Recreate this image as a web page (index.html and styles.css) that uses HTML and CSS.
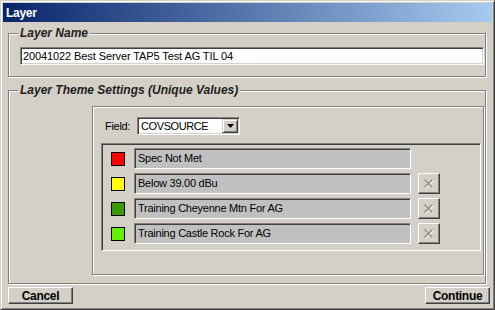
FILE: index.html
```html
<!DOCTYPE html>
<html>
<head>
<meta charset="utf-8">
<title>Layer</title>
<link rel="stylesheet" href="styles.css">
</head>
<body>
<div class="window">
  <div class="titlebar">Layer</div>
  <div class="content">
    <section class="group group-name">
      <div class="legend">Layer Name</div>
      <div class="textbox">20041022 Best Server TAP5 Test AG TIL 04</div>
    </section>
    <section class="group group-theme">
      <div class="legend">Layer Theme Settings (Unique Values)</div>
      <div class="panel">
        <div class="field-row">
          <span class="field-label">Field:</span>
          <div class="combo">
            <span class="combo-text">COVSOURCE</span>
            <span class="combo-btn"><svg width="7" height="4" viewBox="0 0 7 4"><polygon points="0,0 7,0 3.5,4" fill="#000"/></svg></span>
          </div>
        </div>
        <div class="listbox">
          <div class="row">
            <span class="swatch swatch-red"></span>
            <div class="value">Spec Not Met</div>
          </div>
          <div class="row">
            <span class="swatch swatch-yellow"></span>
            <div class="value">Below 39.00 dBu</div>
            <button class="xbtn"><svg width="10" height="10" viewBox="0 0 10 10"><path d="M1.5 1.5 L9.5 9.5 M9.5 1.5 L1.5 9.5" stroke="#ffffff" stroke-width="1.1"/><path d="M0.5 0.5 L8.5 8.5 M8.5 0.5 L0.5 8.5" stroke="#868686" stroke-width="1.2"/></svg></button>
          </div>
          <div class="row">
            <span class="swatch swatch-dkgreen"></span>
            <div class="value">Training Cheyenne Mtn For AG</div>
            <button class="xbtn"><svg width="10" height="10" viewBox="0 0 10 10"><path d="M1.5 1.5 L9.5 9.5 M9.5 1.5 L1.5 9.5" stroke="#ffffff" stroke-width="1.1"/><path d="M0.5 0.5 L8.5 8.5 M8.5 0.5 L0.5 8.5" stroke="#868686" stroke-width="1.2"/></svg></button>
          </div>
          <div class="row">
            <span class="swatch swatch-ltgreen"></span>
            <div class="value">Training Castle Rock For AG</div>
            <button class="xbtn"><svg width="10" height="10" viewBox="0 0 10 10"><path d="M1.5 1.5 L9.5 9.5 M9.5 1.5 L1.5 9.5" stroke="#ffffff" stroke-width="1.1"/><path d="M0.5 0.5 L8.5 8.5 M8.5 0.5 L0.5 8.5" stroke="#868686" stroke-width="1.2"/></svg></button>
          </div>
        </div>
      </div>
    </section>
    <div class="footer">
      <button class="btn">Cancel</button>
      <button class="btn">Continue</button>
    </div>
  </div>
</div>
</body>
</html>
```
FILE: styles.css
```css
* { box-sizing: border-box; }
html, body { margin: 0; padding: 0; }
body {
  background: #d4d0c8;
  font-family: "Liberation Sans", Arial, sans-serif;
  color: #000;
}
.window {
  width: 495px;
  height: 310px;
  background: #d4d0c8;
  border: 1px solid;
  border-color: #d4d0c8 #404040 #404040 #d4d0c8;
  box-shadow: inset 1px 1px 0 #fff, inset -1px -1px 0 #808080;
  padding: 2px;
  display: flex;
  flex-direction: column;
}
.titlebar {
  height: 19px;
  flex: 0 0 19px;
  background: linear-gradient(to right, #0a246a, #a6caf0);
  color: #fff;
  font-weight: bold;
  font-size: 12px;
  line-height: 19px;
  padding: 1px 0 0 3px;
  letter-spacing: -0.3px;
}
.content {
  padding: 11px 0 0 5px;
  display: flex;
  flex-direction: column;
}
.group, .panel {
  border: 1px solid #808080;
  box-shadow: 1px 1px 0 #fff, inset 1px 1px 0 #fff;
  display: flex;
  flex-direction: column;
}
.group {
  width: 478px;
  padding: 0 1px 0 9px;
}
.legend {
  align-self: flex-start;
  margin-top: -8px;
  padding: 0 2px;
  background: #d4d0c8;
  font-weight: bold;
  font-style: italic;
  font-size: 12px;
  line-height: 14px;
  color: #222;
  white-space: nowrap;
}
.group-name { padding-bottom: 11px; }
.textbox {
  margin: 7px 0 0 2px;
  height: 18px;
  background: #fff;
  border: 1px solid;
  border-color: #808080 #fff #fff #808080;
  box-shadow: inset 1px 1px 0 #404040, inset -1px -1px 0 #d4d0c8;
  padding: 1px 0 0 2px;
  font-size: 11px;
  line-height: 15px;
  letter-spacing: -0.1px;
  white-space: nowrap;
}
.group-theme {
  margin-top: 13px;
  padding-bottom: 8px;
}
.panel {
  margin: 9px 0 0 74px;
  padding: 10px 2px 23px 8px;
}
.field-row {
  display: flex;
  align-items: center;
  padding-left: 4px;
  height: 18px;
}
.field-label {
  flex: 0 0 32px;
  font-size: 11px;
  letter-spacing: -0.3px;
}
.combo {
  width: 103px;
  height: 18px;
  background: #fff;
  border: 1px solid;
  border-color: #808080 #fff #fff #808080;
  box-shadow: inset 1px 1px 0 #404040, inset -1px -1px 0 #d4d0c8;
  padding: 1px;
  display: flex;
  align-items: center;
}
.combo-text {
  flex: 1;
  padding-left: 2px;
  font-size: 11px;
  letter-spacing: -0.4px;
}
.combo-btn {
  width: 16px;
  height: 14px;
  background: #d4d0c8;
  border: 1px solid;
  border-color: #d4d0c8 #404040 #404040 #d4d0c8;
  box-shadow: inset 1px 1px 0 #fff, inset -1px -1px 0 #808080;
  display: flex;
  align-items: center;
  justify-content: center;
}
.listbox {
  margin-top: 8px;
  height: 108px;
  border: 1px solid;
  border-color: #808080 #fff #fff #808080;
  box-shadow: inset 1px 1px 0 #404040, inset -1px -1px 0 #d4d0c8;
  padding: 4px 0 0 9px;
  display: flex;
  flex-direction: column;
  gap: 4px;
}
.row {
  display: flex;
  align-items: center;
  height: 21px;
}
.swatch {
  width: 14px;
  height: 14px;
  border: 1px solid #000;
  margin-right: 9px;
}
.swatch-red { background: #ff0000; }
.swatch-yellow { background: #ffff00; }
.swatch-dkgreen { background: #3a9a00; }
.swatch-ltgreen { background: #66f000; }
.value {
  width: 277px;
  height: 21px;
  background: #c0c0c0;
  border: 1px solid;
  border-color: #808080 #fff #fff #808080;
  box-shadow: inset 1px 1px 0 #404040;
  padding-left: 3px;
  font-size: 11px;
  line-height: 19px;
  letter-spacing: -0.25px;
  white-space: nowrap;
}
.xbtn {
  margin-left: 7px;
  width: 22px;
  height: 21px;
  padding: 0;
  background: #d4d0c8;
  border: 1px solid;
  border-color: #fff #404040 #404040 #fff;
  box-shadow: inset -1px -1px 0 #808080;
  display: flex;
  align-items: center;
  justify-content: center;
}
.footer {
  margin-top: 3px;
  width: 482px;
  display: flex;
  justify-content: space-between;
}
.btn {
  width: 65px;
  height: 17px;
  padding: 0;
  background: #d4d0c8;
  border: 1px solid;
  border-color: #fff #404040 #404040 #fff;
  box-shadow: inset -1px -1px 0 #808080;
  font-family: "Liberation Sans", Arial, sans-serif;
  font-weight: bold;
  font-size: 12px;
  letter-spacing: -0.3px;
  color: #000;
  line-height: 14px;
}
```
